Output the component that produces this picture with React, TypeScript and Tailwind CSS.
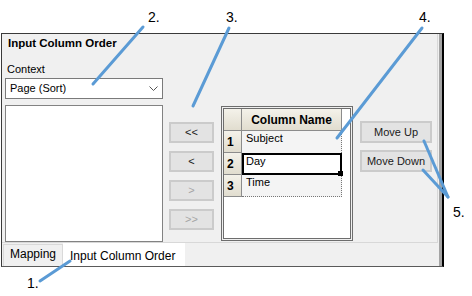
import clsx from "clsx";

type BtnProps = { label: string; disabled?: boolean; className?: string };

function WinButton({ label, disabled, className }: BtnProps) {
  return (
    <button
      type="button"
      className={clsx(
        "flex items-center justify-center border-2 border-[#cbcbcb] bg-[#e3e3e3] text-[11px] leading-none",
        disabled ? "text-[#a5a5a5]" : "text-[#1a1a1a]",
        className
      )}
    >
      {label}
    </button>
  );
}

const headCell =
  "border-r border-b border-[#8c8c8c] bg-gradient-to-b from-[#f4f2ea] to-[#e1ddcf]";

function RowHead({ n }: { n: string }) {
  return (
    <div className={clsx(headCell, "flex h-[22px] items-center pl-[3px] text-[12px] font-bold")}>
      {n}
    </div>
  );
}

function Callout({ text, className }: { text: string; className: string }) {
  return <span className={clsx("absolute text-[14px] leading-[16px] text-black", className)}>{text}</span>;
}

export default function App() {
  return (
    <div className="relative h-[296px] w-[472px] overflow-hidden bg-white font-['Liberation_Sans',Arial,sans-serif] text-black">
      <div className="ml-[1px] mt-[33px] flex h-[234px] w-[443px] border border-[#3a3a3a] border-b-[#5a5a5a] border-r-2 border-r-black bg-[#f0f0f0]">
        <div className="flex w-[436px] flex-col">
          {/* tab page */}
          <div className="h-[209px] border-r border-b border-[#d8d8d8]">
            <div className="pl-[6px] pt-[2px] text-[11.5px] font-bold leading-[14px]">Input Column Order</div>

            <div className="mt-[12px] flex items-start pl-[3px]">
              <div className="w-[158px]">
                <div className="h-[16px] pl-[2px] text-[11px] leading-[14px]">Context</div>
                <div className="flex h-[21px] items-center justify-between border border-[#7a7a7a] bg-white pl-[4px] pr-[4px] text-[11px]">
                  <span>Page (Sort)</span>
                  <svg width="9" height="5" viewBox="0 0 9 5" className="mr-[0px]">
                    <path d="M0.5 0.5 L4.5 4.5 L8.5 0.5" fill="none" stroke="#555" strokeWidth="1" />
                  </svg>
                </div>
                <div className="mt-[6px] h-[137px] border border-[#828282] bg-white" />
              </div>

              <div className="ml-[6px] mt-[60px] flex w-[45px] flex-col gap-[8px]">
                <WinButton label="<<" className="h-[21px] w-[45px]" />
                <WinButton label="<" className="h-[21px] w-[45px]" />
                <WinButton label=">" disabled className="h-[21px] w-[45px]" />
                <WinButton label=">>" disabled className="h-[21px] w-[45px]" />
              </div>

              {/* grid */}
              <div className="ml-[7px] mt-[44px] h-[135px] w-[132px] border border-[#6d6d6d] bg-[#f0f0f0] p-[1px]">
                <div className="h-full border border-[#6d6d6d] bg-white">
                  <div className="grid grid-cols-[18px_100px]">
                    <div className={clsx(headCell, "h-[22px]")} />
                    <div className={clsx(headCell, "flex h-[22px] items-center justify-center text-[12px] font-bold")}>
                      Column Name
                    </div>

                    <RowHead n="1" />
                    <div className="h-[22px] border-r border-dotted border-[#777] bg-[#f4f4f4] pl-[4px] text-[11px] leading-[14px]">
                      Subject
                    </div>

                    <RowHead n="2" />
                    <div className="relative h-[22px] border-2 border-black bg-white pl-[2px] text-[11px] leading-[12px]">
                      Day
                      <span className="absolute bottom-[-3px] right-[-3px] h-[5px] w-[5px] bg-black" />
                    </div>

                    <RowHead n="3" />
                    <div className="h-[22px] border-r border-b border-dotted border-[#777] bg-[#f4f4f4] pl-[4px] text-[11px] leading-[14px]">
                      Time
                    </div>
                  </div>
                </div>
              </div>

              <div className="ml-[7px] mt-[59px] flex w-[72px] flex-col gap-[7px]">
                <WinButton label="Move Up" className="h-[22px] w-[72px]" />
                <WinButton label="Move Down" className="h-[22px] w-[72px]" />
              </div>
            </div>
          </div>

          {/* tab strip */}
          <div className="flex h-[23px] items-start">
            <div className="ml-[1px] mt-[1px] h-[22px] w-[60px] border-l border-t border-r border-[#d9d9d9] pl-[6px] pt-[1px] text-[12px] leading-[16px]">
              Mapping
            </div>
            <div className="h-[23px] w-[122px] bg-white pl-[7px] pt-[5px] text-[12px] leading-[16px]">
              Input Column Order
            </div>
          </div>
        </div>
        <div className="w-[1px]" />
        <div className="w-[3px] bg-[#a4a4a4]" />
      </div>

      {/* callouts */}
      <svg className="pointer-events-none absolute left-0 top-0" width="472" height="296">
        <g stroke="#5b9bd5" strokeWidth="3" strokeLinecap="round" fill="none">
          <line x1="143" y1="27" x2="93" y2="84" />
          <line x1="229" y1="28" x2="193" y2="106" />
          <line x1="422" y1="28" x2="337" y2="138" />
          <line x1="424" y1="141" x2="448" y2="197" />
          <line x1="423" y1="170" x2="448" y2="197" />
          <line x1="40" y1="281" x2="70" y2="261" />
        </g>
      </svg>
      <Callout text="2." className="left-[148px] top-[9px]" />
      <Callout text="3." className="left-[226px] top-[9px]" />
      <Callout text="4." className="left-[419px] top-[9px]" />
      <Callout text="5." className="left-[453px] top-[204px]" />
      <Callout text="1." className="left-[27px] top-[275px]" />
    </div>
  );
}
